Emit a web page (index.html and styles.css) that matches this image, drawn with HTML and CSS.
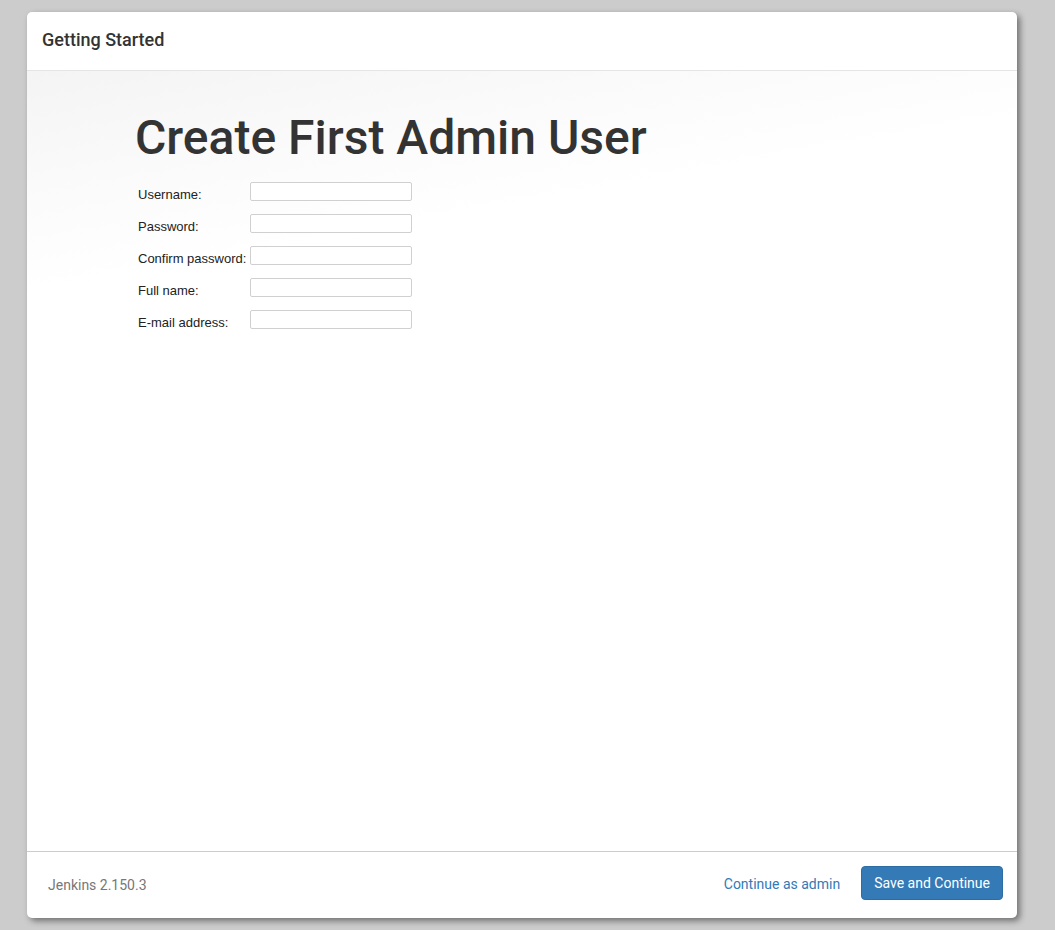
FILE: index.html
```html
<!DOCTYPE html>
<html>
<head>
<meta charset="utf-8">
<title>Getting Started</title>
<link rel="stylesheet" href="styles.css">
</head>
<body>
<div class="page">
  <div class="dialog">
    <div class="dialog-header">
      <h4 class="dialog-title">Getting Started</h4>
    </div>
    <div class="dialog-body">
      <div class="content">
        <h1 class="heading">Create First Admin User</h1>
        <form class="form">
          <div class="row"><label class="label">Username:</label><input class="input" type="text"></div>
          <div class="row"><label class="label">Password:</label><input class="input" type="password"></div>
          <div class="row"><label class="label">Confirm password:</label><input class="input" type="password"></div>
          <div class="row"><label class="label">Full name:</label><input class="input" type="text"></div>
          <div class="row"><label class="label">E-mail address:</label><input class="input" type="text"></div>
        </form>
      </div>
    </div>
    <div class="dialog-footer">
      <div class="version">Jenkins 2.150.3</div>
      <div class="actions">
        <a class="link" href="#">Continue as admin</a>
        <button class="btn" type="button">Save and Continue</button>
      </div>
    </div>
  </div>
</div>
</body>
</html>
```
FILE: styles.css
```css
html, body {
  margin: 0;
  padding: 0;
  height: 100%;
}
body {
  background: #cccccc;
  font-family: Roboto, "Liberation Sans", sans-serif;
  color: #333333;
}
.page {
  padding: 12px 38px 12px 27px;
  box-sizing: border-box;
  height: 100%;
}
.dialog {
  width: 990px;
  height: 906px;
  background: #ffffff;
  border-radius: 5px;
  box-shadow: 3px 3px 6px rgba(0, 0, 0, 0.45);
  display: flex;
  flex-direction: column;
  overflow: hidden;
}
.dialog-header {
  border-bottom: 1px solid #e5e5e5;
  display: flex;
  align-items: center;
  padding: 0 15px 4px 15px;
  box-sizing: border-box;
  height: 59px;
  flex: none;
}
.dialog-title {
  margin: 0;
  font-size: 18px;
  font-weight: 500;
  color: #333333;
}
.dialog-body {
  flex: 1;
  background: linear-gradient(170deg, #f4f4f4 0px, #fafafa 110px, #ffffff 220px);
}
.content {
  padding: 38px 0 0 108px;
}
.heading {
  margin: 0 0 15px 0;
  font-size: 48px;
  font-weight: 500;
  line-height: 58px;
  color: #333333;
}
.form {
  display: flex;
  flex-direction: column;
  gap: 13px;
  padding-left: 3px;
}
.row {
  display: flex;
  align-items: flex-end;
  height: 19px;
}
.label {
  width: 112px;
  font-family: "Liberation Sans", Arial, sans-serif;
  font-size: 13px;
  line-height: 14px;
  margin-bottom: -1px;
  color: #222222;
}
.input {
  width: 162px;
  height: 19px;
  box-sizing: border-box;
  border: 1px solid #d0d0d0;
  border-radius: 2px;
  background: #ffffff;
  margin: 0;
  padding: 0 4px;
  align-self: flex-start;
}
.dialog-footer {
  flex: none;
  border-top: 1px solid #cccccc;
  display: flex;
  align-items: center;
  justify-content: space-between;
  padding: 0 14px 2px 21px;
  box-sizing: border-box;
  height: 67px;
}
.version {
  font-size: 14px;
  color: #777777;
  padding-top: 2px;
}
.actions {
  display: flex;
  align-items: center;
  gap: 21px;
}
.link {
  font-size: 14px;
  color: #337ab7;
  text-decoration: none;
}
.btn {
  font-family: Roboto, "Liberation Sans", sans-serif;
  font-size: 14px;
  color: #ffffff;
  background: #337ab7;
  border: 1px solid #2e6da4;
  border-radius: 4px;
  height: 34px;
  padding: 0 12px;
  margin-top: -3px;
}
```
